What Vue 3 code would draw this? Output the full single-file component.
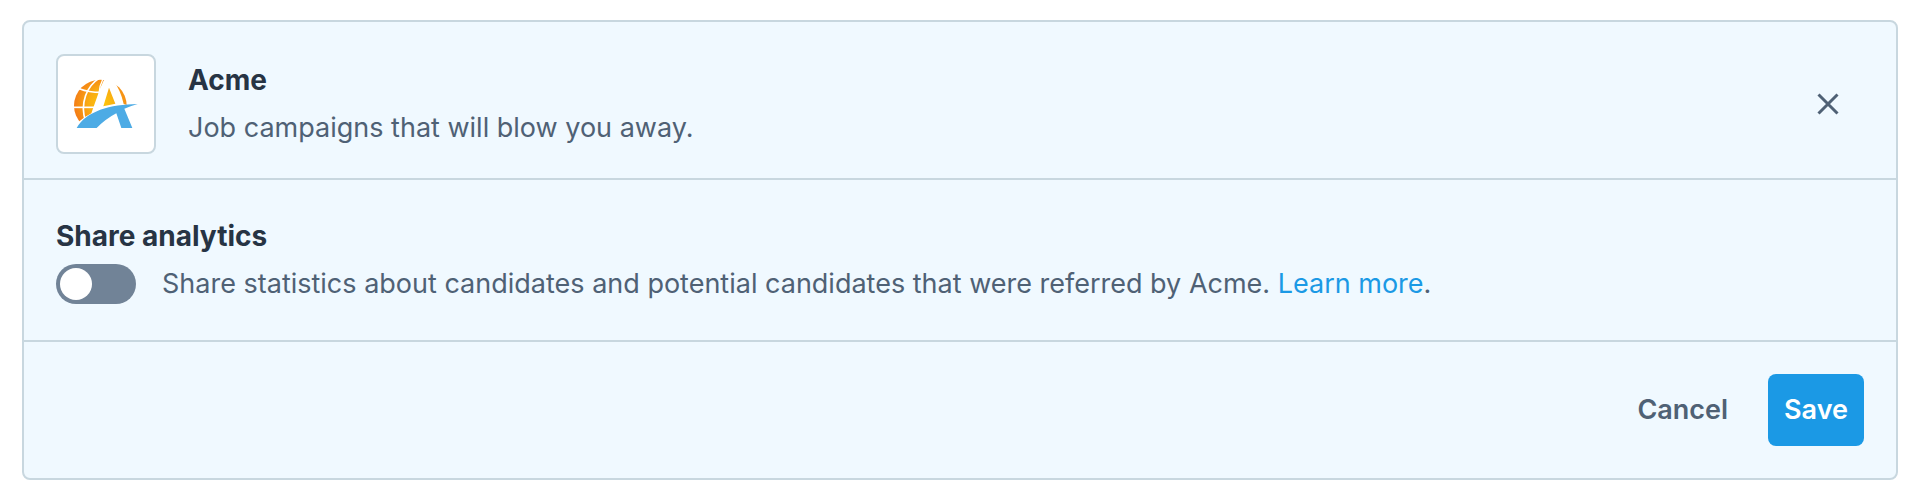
<script setup>
import { ref } from 'vue'

const shareAnalytics = ref(false)
</script>

<template>
  <main class="page">
    <form class="card" @submit.prevent>
      <header class="section head">
        <div class="logo">
          <svg viewBox="24 18 288 288" role="img" aria-label="Acme logo">
            <defs>
              <radialGradient id="globe" gradientUnits="userSpaceOnUse" cx="158" cy="160" r="86">
                <stop offset="0" stop-color="#fdc70c" />
                <stop offset="0.5" stop-color="#f9ac12" />
                <stop offset="1" stop-color="#f47d16" />
              </radialGradient>
            </defs>
            <ellipse cx="151" cy="167" rx="79" ry="78" fill="url(#globe)" />
            <g fill="none" stroke="#fff" stroke-width="5">
              <path d="M68 172H150" />
              <path d="M88 116Q118 128 160 127" />
              <path d="M146 86C112 108 88 158 107 216" />
              <path d="M160 84C152 100 148 112 147 130" stroke-width="4" />
            </g>
            <path
              d="M160 94L166 84H186Q212 120 221 162L240 168V260H70L88 214Q108 198 124 190L150 116Z M177 113L160 169Q178 164 196 161Z"
              fill="#fff"
              fill-rule="evenodd"
            />
            <path
              d="M80 234C108 184 180 163 263 162Q242 168 223 176L247 234H214L199 190Q168 206 140 234Z"
              fill="#4dabe5"
            />
          </svg>
        </div>
        <div class="info">
          <h1>Acme</h1>
          <p>Job campaigns that will blow you away.</p>
        </div>
        <button type="button" class="close" aria-label="Close">
          <svg viewBox="0 0 24 24"><path d="M2.5 2.5l19 19M21.5 2.5l-19 19" /></svg>
        </button>
      </header>

      <section class="section">
        <h2>Share analytics</h2>
        <div class="setting">
          <input id="share" v-model="shareAnalytics" type="checkbox" role="switch" class="toggle" />
          <p>
            <label for="share">Share statistics about candidates and potential candidates that were referred by Acme.</label> <a href="#">Learn more</a>.
          </p>
        </div>
      </section>

      <footer class="section actions">
        <button type="button" class="btn">Cancel</button>
        <button type="submit" class="btn primary">Save</button>
      </footer>
    </form>
  </main>
</template>

<style>
body {
  margin: 0;
  background: #fff;
}
</style>

<style scoped>
.page {
  padding: 20px 28px 20px 22px;
  font: 400 27px/48px Inter, "Liberation Sans", sans-serif;
  color: #4f6175;
}
.card {
  border: 2px solid #c8d7df;
  border-radius: 8px;
  background: #f0f9ff;
}
.section {
  padding: 32px;
}
.section + .section {
  border-top: 2px solid #c8d7df;
}
h1,
h2,
p {
  margin: 0;
  line-height: 48px;
}
h1,
h2 {
  font-size: 28px;
  font-weight: 700;
  color: #273444;
}
.head {
  display: flex;
  align-items: center;
  gap: 32px;
  padding-bottom: 24px;
}
.logo {
  flex: none;
  box-sizing: border-box;
  width: 100px;
  height: 100px;
  border: 2px solid #c8d7df;
  border-radius: 8px;
  background: #fff;
}
.logo svg {
  display: block;
  width: 100%;
  height: 100%;
}
.info {
  flex: 1;
}
button {
  border: 0;
  background: none;
  color: inherit;
  cursor: pointer;
}
.close {
  display: flex;
  align-items: center;
  justify-content: center;
  width: 72px;
  height: 72px;
  padding: 0;
}
.close svg {
  width: 24px;
  height: 24px;
  fill: none;
  stroke: currentColor;
  stroke-width: 3;
}
.setting {
  display: flex;
  align-items: center;
  gap: 26px;
}
.toggle {
  flex: none;
  appearance: none;
  box-sizing: border-box;
  width: 80px;
  height: 40px;
  margin: 0;
  padding: 4px;
  border-radius: 20px;
  background: #718397;
  cursor: pointer;
}
.toggle::before {
  content: "";
  display: block;
  width: 32px;
  height: 32px;
  border-radius: 50%;
  background: #fff;
}
.toggle:checked {
  background: #1b99e5;
}
.toggle:checked::before {
  margin-left: auto;
}
a {
  color: #1b99e5;
  text-decoration: none;
}
.actions {
  display: flex;
  justify-content: flex-end;
  gap: 24px;
}
.btn {
  height: 72px;
  padding: 0 16px;
  border-radius: 8px;
  font: 600 27px/48px Inter, "Liberation Sans", sans-serif;
}
.primary {
  background: #1b99e5;
  color: #fff;
}
</style>
